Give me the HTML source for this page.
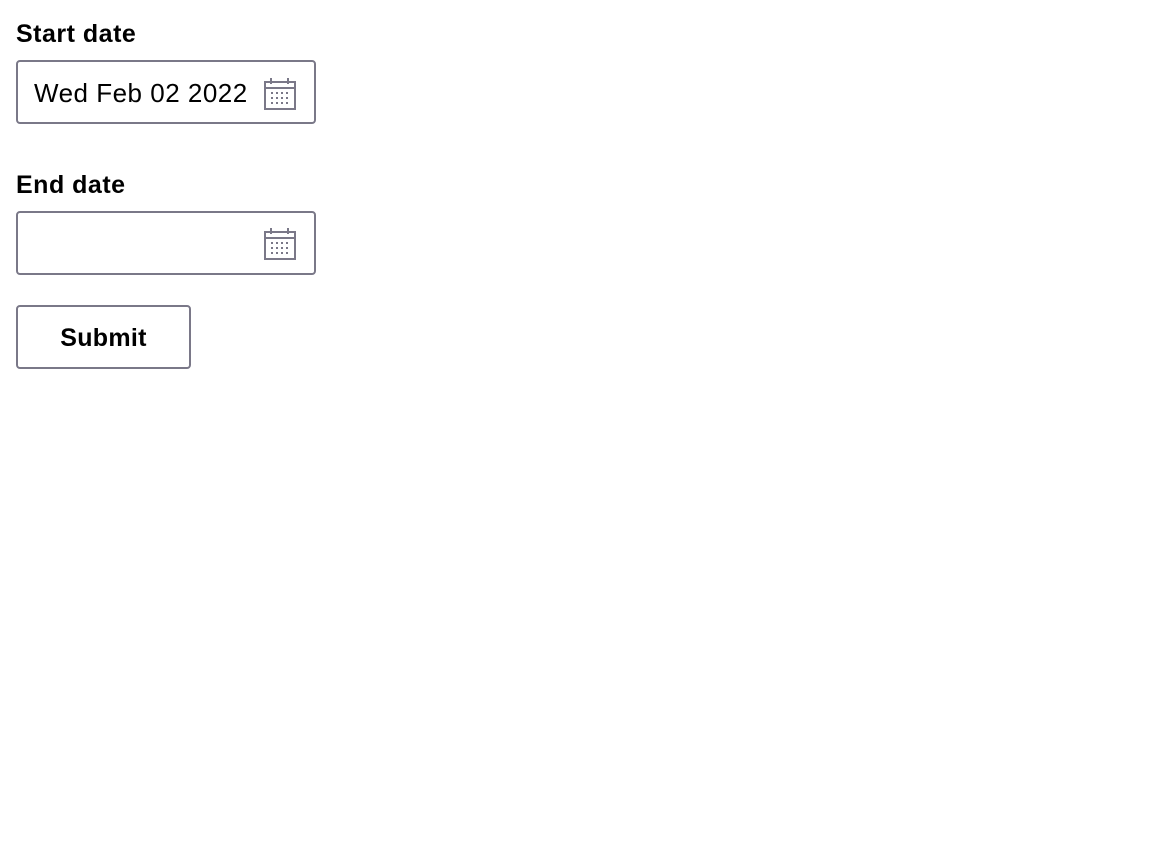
<!DOCTYPE html>
<html><head><style>
body{margin:0;background:#fff;font-family:"Liberation Sans",sans-serif;color:#000;}
.lbl{position:absolute;left:16px;font-size:25px;font-weight:bold;line-height:30px;letter-spacing:0.5px;}
.inp{position:absolute;left:16px;width:296px;height:60px;border:2px solid #7a7888;border-radius:4px;}
.txt{position:absolute;left:16px;top:16px;font-size:26px;line-height:30px;letter-spacing:0.5px;}
svg{position:absolute;left:244px;top:16px;}
.btn{position:absolute;left:16px;top:305px;width:171px;height:60px;border:2px solid #7a7888;border-radius:4px;font-size:25px;font-weight:bold;text-align:center;line-height:62px;letter-spacing:0.3px;}
</style></head><body>
<div class="lbl" style="top:19px">Start date</div>
<div class="inp" style="top:60px"><div class="txt">Wed Feb 02 2022</div>
<svg width="34" height="32" viewBox="0 0 34 32"><g fill="none" stroke="#7a7888" stroke-width="2"><rect x="3" y="4" width="30" height="27"/><line x1="3" y1="10" x2="33" y2="10"/><line x1="9" y1="0" x2="9" y2="6"/><line x1="26" y1="0" x2="26" y2="6"/></g><g fill="#7a7888"><rect x="9" y="14" width="2" height="2"/><rect x="14" y="14" width="2" height="2"/><rect x="19" y="14" width="2" height="2"/><rect x="24" y="14" width="2" height="2"/><rect x="9" y="19" width="2" height="2"/><rect x="14" y="19" width="2" height="2"/><rect x="19" y="19" width="2" height="2"/><rect x="24" y="19" width="2" height="2"/><rect x="9" y="24" width="2" height="2"/><rect x="14" y="24" width="2" height="2"/><rect x="19" y="24" width="2" height="2"/><rect x="24" y="24" width="2" height="2"/></g></svg></div>
<div class="lbl" style="top:170px">End date</div>
<div class="inp" style="top:211px">
<svg width="34" height="32" viewBox="0 0 34 32" style="top:15px"><g fill="none" stroke="#7a7888" stroke-width="2"><rect x="3" y="4" width="30" height="27"/><line x1="3" y1="10" x2="33" y2="10"/><line x1="9" y1="0" x2="9" y2="6"/><line x1="26" y1="0" x2="26" y2="6"/></g><g fill="#7a7888"><rect x="9" y="14" width="2" height="2"/><rect x="14" y="14" width="2" height="2"/><rect x="19" y="14" width="2" height="2"/><rect x="24" y="14" width="2" height="2"/><rect x="9" y="19" width="2" height="2"/><rect x="14" y="19" width="2" height="2"/><rect x="19" y="19" width="2" height="2"/><rect x="24" y="19" width="2" height="2"/><rect x="9" y="24" width="2" height="2"/><rect x="14" y="24" width="2" height="2"/><rect x="19" y="24" width="2" height="2"/><rect x="24" y="24" width="2" height="2"/></g></svg></div>
<div class="btn">Submit</div>
</body></html>
